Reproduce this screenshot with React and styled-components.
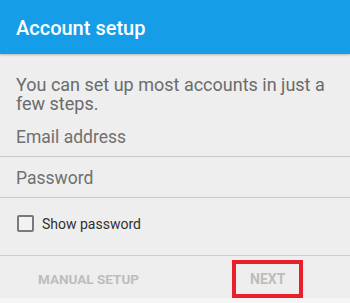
import styled, { createGlobalStyle } from 'styled-components';

const GlobalStyle = createGlobalStyle`
  html, body {
    margin: 0;
    padding: 0;
    background: #eeeeee;
  }
  body {
    font-family: Roboto, "Noto Sans", "Liberation Sans", sans-serif;
  }
`;

export default function App() {
  return (
    <Screen>
      <GlobalStyle />
      <Header>
        <Title>Account setup</Title>
      </Header>

      <Intro>You can set up most accounts in just a few steps.</Intro>

      <Field>Email address</Field>
      <Field>Password</Field>

      <CheckRow>
        <Checkbox />
        <CheckLabel>Show password</CheckLabel>
      </CheckRow>

      <Footer>
        <FooterButton>MANUAL SETUP</FooterButton>
        <FooterButton highlighted>NEXT</FooterButton>
      </Footer>
    </Screen>
  );
}

const Screen = styled.div`
  width: 350px;
  height: 303px;
  background: #eeeeee;
  display: flex;
  flex-direction: column;
  overflow: hidden;
`;

const Header = styled.div`
  height: 54px;
  background: #159de8;
  display: flex;
  align-items: center;
  padding: 0 16px;
  box-shadow: 0 1px 2px rgba(0, 0, 0, 0.25);
  flex-shrink: 0;
`;

const Title = styled.h1`
  margin: 0;
  color: #ffffff;
  font-size: 20px;
  font-weight: 500;
  line-height: 24px;
  padding-top: 1px;
`;

const Intro = styled.p`
  margin: 21px 14px 0 16px;
  font-size: 18px;
  line-height: 19px;
  color: #6b6b6b;
`;

const Field = styled.div`
  margin-top: 3px;
  padding: 11px 16px 9px;
  font-size: 17.5px;
  line-height: 20px;
  color: #707070;
  border-bottom: 1px solid #c9c9c9;

  & + & {
    margin-top: 0;
  }
`;

const CheckRow = styled.div`
  display: flex;
  align-items: center;
  gap: 8px;
  margin: 15px 0 0 17px;
`;

const Checkbox = styled.span`
  width: 13px;
  height: 13px;
  border: 2px solid #7a7a7a;
  border-radius: 2px;
  background: #f2f2f2;
`;

const CheckLabel = styled.span`
  font-size: 14px;
  line-height: 18px;
  color: #303030;
  padding-top: 2px;
`;

const Footer = styled.div`
  margin-top: 22px;
  border-top: 1px solid #cdcdcd;
  height: 45px;
  display: flex;
  align-items: flex-start;
  padding: 4px 47px 0 16px;
  justify-content: space-between;
  border-bottom: 5px solid #f5f5f5;
`;

const FooterButton = styled.button`
  height: 38px;
  padding: 0 ${(p) => (p.highlighted ? '14px' : '18px')};
  border: ${(p) => (p.highlighted ? '4px solid #e8202b' : '4px solid transparent')};
  background: transparent;
  font-family: Roboto, "Noto Sans", "Liberation Sans", sans-serif;
  font-size: ${(p) => (p.highlighted ? '14px' : '13.5px')};
  font-weight: 700;
  color: #bdbdbd;
  letter-spacing: 0;
  cursor: pointer;
  width: ${(p) => (p.highlighted ? '71px' : 'auto')};
`;
